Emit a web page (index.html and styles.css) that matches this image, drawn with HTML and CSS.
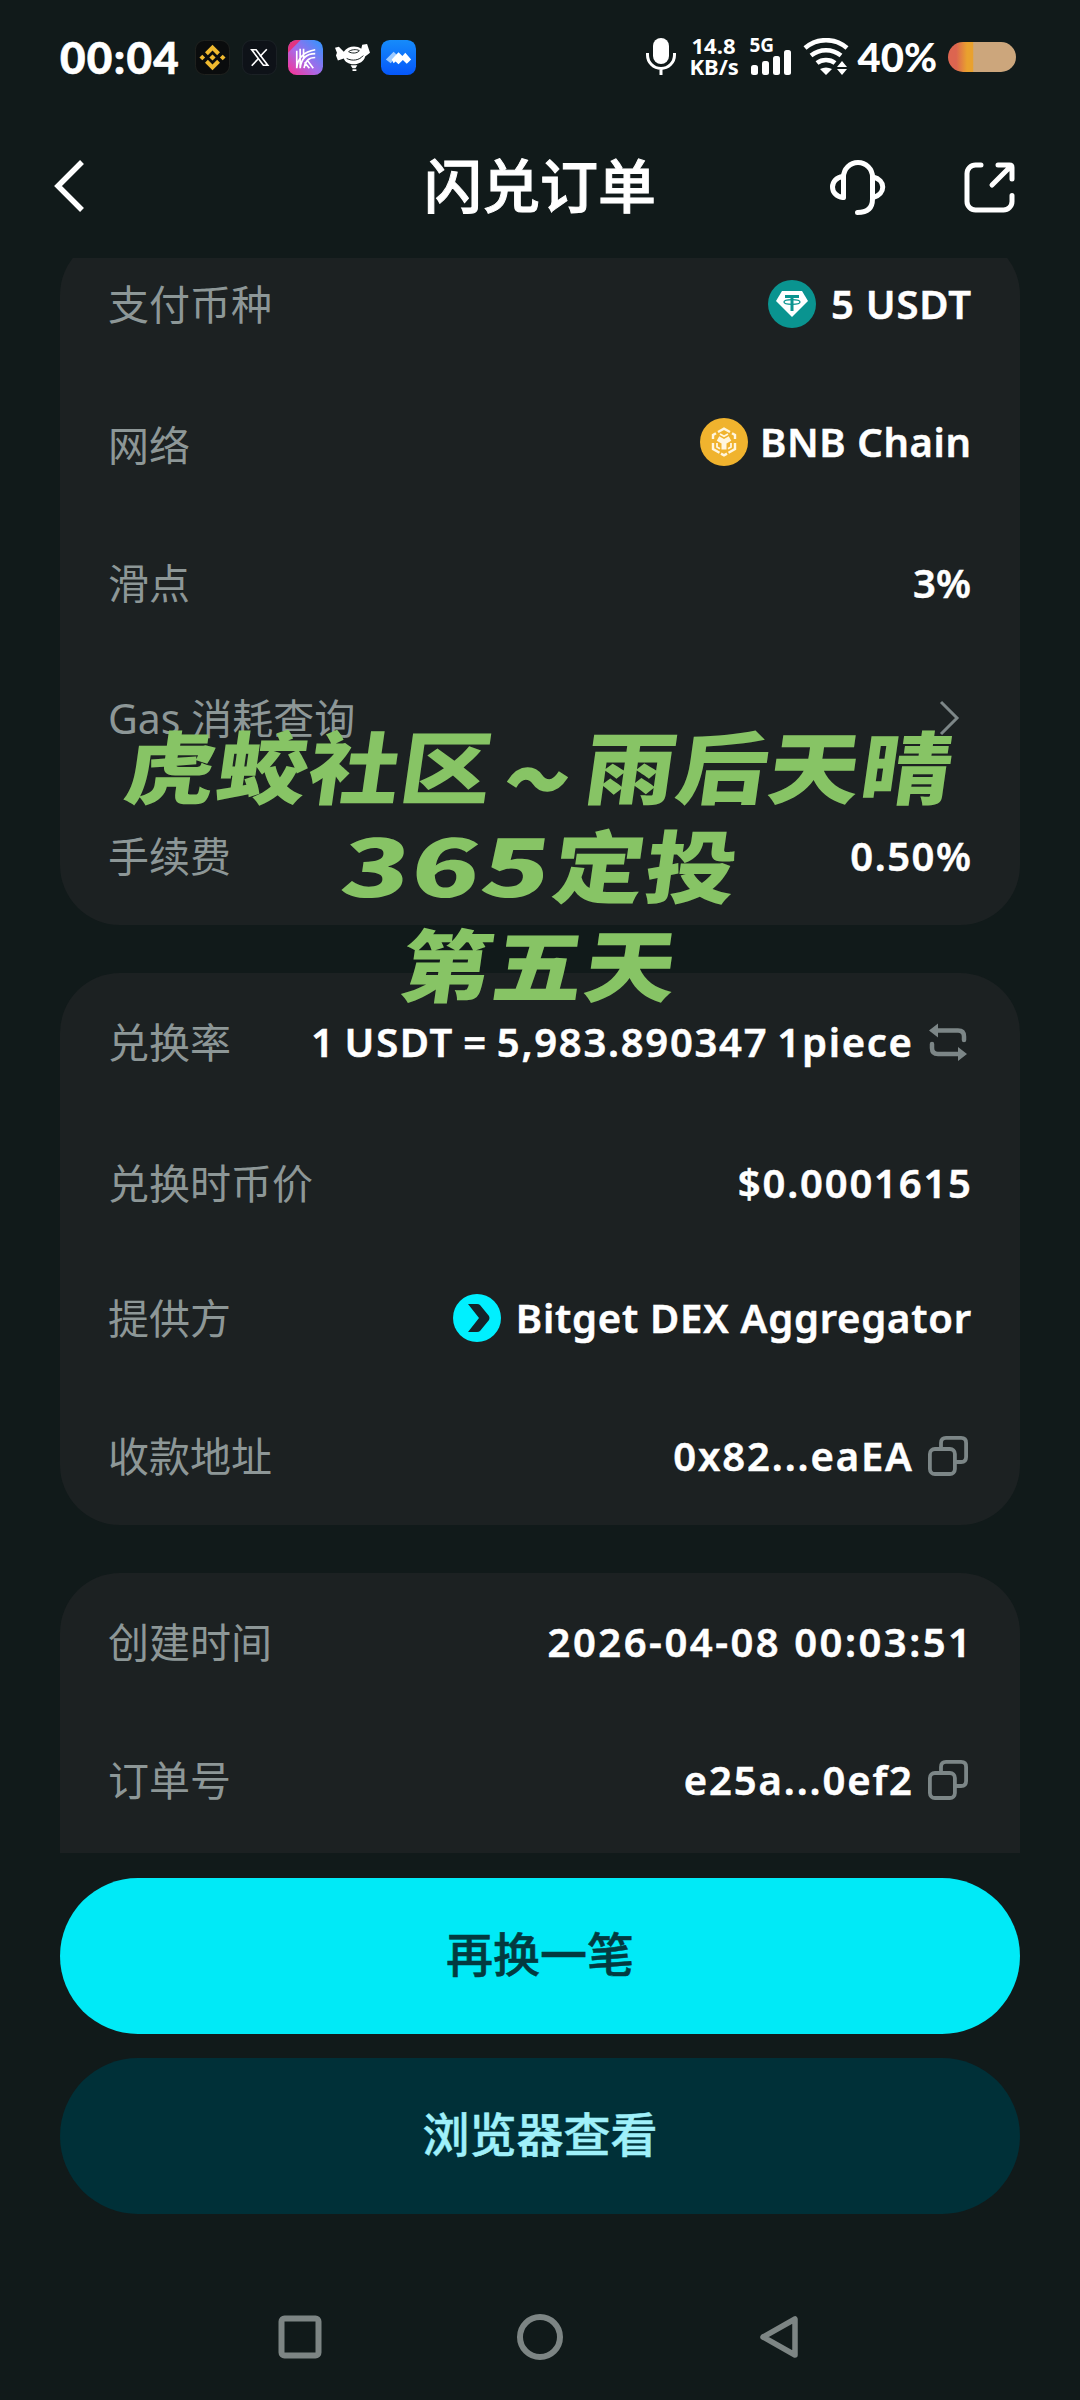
FILE: index.html
```html
<!DOCTYPE html>
<html lang="zh-CN">
<head>
<meta charset="utf-8">
<title>闪兑订单</title>
<link rel="stylesheet" href="styles.css">
</head>
<body>
<div class="phone">
  <header class="status">
    <span class="clock">00:04</span>
    <div class="apps">
      <svg class="app" viewBox="0 0 36 36"><rect x=".5" y=".5" width="35" height="35" rx="9" fill="#0a0c0d" stroke="#20221f"/><g fill="#efb92f"><path d="M18 5l7.700 7.700-2.900 2.900L18 10.800l-4.800 4.800-2.900-2.900zM18 31l7.700-7.700-2.900-2.900L18 25.200l-4.800-4.800-2.900 2.900zM7.500 15.100l2.900 2.900-2.900 2.900L4.600 18zM28.500 15.100l2.900 2.900-2.900 2.900-2.900-2.900zM18 14.800l3.200 3.200-3.200 3.200-3.200-3.200z"/></g></svg>
      <svg class="app" viewBox="0 0 36 36"><rect x=".5" y=".5" width="35" height="35" rx="9" fill="#0e1218" stroke="#1c2226"/><path d="M10 10h4.500l12 16h-4.500z" fill="none" stroke="#fff" stroke-width="1.700"/><path d="M25.500 9.500l-7 7.500M17 19l-7 7.500" stroke="#fff" stroke-width="1.700"/></svg>
      <svg class="app" viewBox="0 0 36 36"><defs><linearGradient id="k" x1="0" y1="1" x2="1" y2="0"><stop offset="0" stop-color="#ff2f8e"/><stop offset=".45" stop-color="#a869e8"/><stop offset="1" stop-color="#2b98ff"/></linearGradient></defs><rect width="36" height="36" rx="9" fill="url(#k)"/><path d="M0 13V9a9 9 0 0 1 9-9h4z" fill="#e2347f"/><g fill="none" stroke="#fff" stroke-width="1.700"><path d="M9 11v18M12.500 9v20M16 9v10M9 29c1-11 7-17 19-19M12.500 29c1-9 6-15 15.500-15M16.500 29c1-7 5-11 11.500-11M17 23l5 6M20 21l6 8"/></g></svg>
      <svg class="app" viewBox="0 0 36 36"><path d="M0 8l4-1 5 5c4-6 13-7 18-3l1-4 5-1 3 9-5 4c-1 5-6 8-12 8-5 0-9-3-10-6l-6 2-2-5 1-3z" fill="#fff"/><path d="M14 12c2-2 8-3 11-1-2 3-8 3-11 1zM12 19c6 3 13 2 17-3" fill="none" stroke="#111a1a" stroke-width="1"/><path d="M16 26h7l-2 3h-3zM18 30h4v2h-4z" fill="#fff"/></svg>
      <svg class="app" viewBox="0 0 36 36"><defs><linearGradient id="b" x1="0" y1="0" x2="0" y2="1"><stop offset="0" stop-color="#168bfa"/><stop offset="1" stop-color="#0557fa"/></linearGradient></defs><rect width="36" height="36" rx="9" fill="url(#b)"/><path d="M5 20l8-8 4 4-7 8z" fill="#9dcaff"/><path d="M11 20l7-7.500 4 4 3-3.500 6 7-4.500 4.500-4-4-4.500 4.500-3-3-2 2z" fill="#fff"/></svg>
    </div>
    <div class="signals">
      <svg class="mic" viewBox="0 0 30 38"><rect x="7" y="0" width="16" height="26" rx="8" fill="#fff"/><path d="M1.500 15v2a13.500 13.500 0 0 0 27 0v-2M15 30v7" fill="none" stroke="#fff" stroke-width="3"/></svg>
      <div class="speed"><span>14.8</span><span>KB/s</span></div>
      <div class="cell"><span>5G</span><svg viewBox="0 0 42 26"><g fill="#fff"><rect x="1" y="15" width="7" height="10" rx="2.500"/><rect x="12" y="11" width="7" height="14" rx="2.500"/><rect x="23" y="6" width="7" height="19" rx="2.500"/><rect x="34" y="0" width="7" height="25" rx="2.500"/></g></svg></div>
      <svg class="wifi" viewBox="0 0 46 38"><g fill="none" stroke="#fff" stroke-width="4.500"><path d="M2 10C14-.500 32-.500 44 10M8 17.500c9-7 21-7 30 0M14 25c5-4 13-4 18 0"/></g><path d="M17 31q6-3 12 0l-6 6zM34 29l5-6 5 6zM34 31h10l-5 6z" fill="#fff"/></svg>
      <span class="percent">40%</span>
      <span class="battery"></span>
    </div>
  </header>

  <nav class="titlebar">
    <svg class="back" viewBox="0 0 32 54"><path d="M28 3L4 27l24 24" fill="none" stroke="#fff" stroke-width="5.500"/></svg>
    <h1>闪兑订单</h1>
    <svg class="headset" viewBox="0 0 58 58"><g fill="none" stroke="#fff" stroke-width="5" stroke-linecap="round" stroke-linejoin="round"><path d="M14.500 38.500V18a14.500 14.500 0 0 1 29 0v22q0 13.500-15 13.500"/><path d="M14 17.500C0 19 0 37 14 38.500M44 18c13 3 13 17 0 20.500"/></g></svg>
    <svg class="share" viewBox="0 0 52 52"><g fill="none" stroke="#fff" stroke-width="5" stroke-linecap="round" stroke-linejoin="round"><path d="M17 3H11.500a8.500 8.500 0 0 0-8.500 8.500v28a8.500 8.500 0 0 0 8.500 8.500h28a8.500 8.500 0 0 0 8.500-8.500V33.500M34 3h11.500q2.500 0 2.500 2.500V17M47 4L28 23"/></g></svg>
  </nav>

  <main class="content">
    <section class="card card-pay">
      <div class="row"><span class="label">支付币种</span><span class="value"><svg class="coin" viewBox="0 0 48 48"><circle cx="24" cy="24" r="24" fill="#0a9490"/><path d="M14 11h20l6 10-16 16L8 21z" fill="#fff"/><path d="M17 16.500h14M24 16v15" stroke="#0a9490" stroke-width="3"/><ellipse cx="24" cy="22" rx="8" ry="2.300" fill="none" stroke="#0a9490" stroke-width="1.300"/></svg><b class="w-usdt">5 USDT</b></span></div>
      <div class="row row-network"><span class="label">网络</span><span class="value"><svg class="coin" viewBox="0 0 48 48"><circle cx="24" cy="24" r="24" fill="#f0b32e"/><g fill="none" stroke="#fff6df" stroke-width="2.400"><path d="M18 14l6-3.300 6 3.300M13 21v-4l3-1.800M35 21v-4l-3-1.800M13 25v6l6.500 3.800M35 25v6l-6.500 3.800M21 35.600l3 1.700 3-1.700"/><path d="M18 20.500l6 3.500 6-3.500M24 24v7.500" stroke-width="5"/><path d="M20 16l4 2.300 4-2.300M17 25v4l3 1.800M31 25v4l-3 1.800" stroke-width="1.800"/></g></svg><b class="w-bnb">BNB Chain</b></span></div>
      <div class="row row-plain"><span class="label">滑点</span><span class="value"><b>3%</b></span></div>
      <div class="row"><span class="label">Gas 消耗查询</span><span class="value"><svg class="more" viewBox="0 0 22 36"><path d="M2 2l16 16L2 34" fill="none" stroke="#7d8788" stroke-width="3"/></svg></span></div>
      <div class="row"><span class="label">手续费</span><span class="value"><b class="w-fee">0.50%</b></span></div>
    </section>

    <section class="card card-rate">
      <div class="row"><span class="label">兑换率</span><span class="value"><b class="w-rate">1 USDT = 5,983.890347 1piece</b><svg class="tool" viewBox="0 0 40 40"><g fill="none" stroke="#7c8687" stroke-width="4.500" stroke-linecap="round"><path d="M8 8.500h22q6 0 6 6V18M32 32H10q-6 0-6-6v-4"/></g><path d="M1 8.500L10 1.500v14zM39 32l-9-7v14z" fill="#7c8687"/></svg></span></div>
      <div class="row row-plain"><span class="label">兑换时币价</span><span class="value"><b class="w-price">$0.0001615</b></span></div>
      <div class="row"><span class="label">提供方</span><span class="value"><svg class="coin" viewBox="0 0 48 48"><circle cx="24" cy="24" r="24" fill="#00f0ff"/><path d="M15 10h9q2 0 3 1l9 11q1 2 0 4l-9 11q-1 1-3 1h-9l11-14z" fill="#14242a"/></svg><b class="w-dex">Bitget DEX Aggregator</b></span></div>
      <div class="row"><span class="label">收款地址</span><span class="value"><b class="w-hash">0x82...eaEA</b><svg class="tool" viewBox="0 0 40 40"><g fill="none" stroke="#7c8687" stroke-width="3.800"><rect x="1.900" y="13" width="25" height="25" rx="5"/><path d="M13 13V6.900q0-5 5-5h15.100q5 0 5 5V21q0 5-5 5h-6.500"/></g></svg></span></div>
    </section>

    <section class="card card-meta">
      <div class="row"><span class="label">创建时间</span><span class="value"><b class="w-date">2026-04-08 00:03:51</b></span></div>
      <div class="row"><span class="label">订单号</span><span class="value"><b class="w-hash">e25a...0ef2</b><svg class="tool" viewBox="0 0 40 40"><g fill="none" stroke="#7c8687" stroke-width="3.800"><rect x="1.900" y="13" width="25" height="25" rx="5"/><path d="M13 13V6.900q0-5 5-5h15.100q5 0 5 5V21q0 5-5 5h-6.500"/></g></svg></span></div>
    </section>
  </main>

  <div class="actions">
    <button class="btn primary">再换一笔</button>
    <button class="btn secondary">浏览器查看</button>
  </div>

  <footer class="navkeys">
    <svg viewBox="0 0 48 48"><rect x="5.500" y="5.500" width="37" height="37" rx="3" fill="none" stroke="#7d8584" stroke-width="6"/></svg>
    <svg viewBox="0 0 48 48"><circle cx="24" cy="24" r="20" fill="none" stroke="#7d8584" stroke-width="6"/></svg>
    <svg viewBox="0 0 48 48"><path d="M39 6v36L7 24z" fill="none" stroke="#7d8584" stroke-width="5.500" stroke-linejoin="round"/></svg>
  </footer>

  <div class="caption">
    <p>虎蛟社区<span class="tilde">～</span>雨后天晴</p>
    <p><span class="digits">365</span>定投</p>
    <p>第五天</p>
  </div>
</div>
</body>
</html>
```
FILE: styles.css
```css
* { box-sizing: border-box; }
body { margin: 0; background: #111a1a; }
svg { display: block; flex: none; }
.phone {
  position: relative;
  width: 1080px;
  height: 2400px;
  overflow: hidden;
  display: flex;
  flex-direction: column;
  background: #111a1a;
  color: #fff;
  font-family: "Noto Sans", "Noto Sans CJK SC", sans-serif;
}

/* status bar */
.status { height: 114px; display: flex; align-items: center; padding: 0 64px 0 60px; }
.clock { font: 900 44px/60px Lato, sans-serif; letter-spacing: 1.300px; width: 135px; -webkit-text-stroke: .6px currentColor; }
.apps { display: flex; gap: 11.600px; }
.app { width: 35px; height: 35px; }
.signals { margin-left: auto; display: flex; align-items: center; }
.mic { width: 30px; height: 38px; margin-right: 14px; }
.speed { display: flex; flex-direction: column; width: 48px; font: 700 22px/21px "Noto Sans", sans-serif; text-align: center; margin: 0 12px 3px 0; }
.cell { width: 44px; font: 700 19px/15px "Noto Sans", sans-serif; }
.cell span { display: block; height: 12px; }
.cell svg { width: 42px; height: 26px; }
.wifi { width: 46px; height: 38px; margin: 0 9px; }
.percent { font: 900 40px/60px Lato, sans-serif; width: 82px; }
.battery { width: 68px; height: 30px; margin-left: 8.500px; border-radius: 15px; background: linear-gradient(90deg, #dc6550 0 12%, #e9a12e 28% 36%, #cca67c 38%); }

/* title bar */
.titlebar { height: 144px; display: flex; align-items: center; padding: 0 64px 0 54px; }
.back { width: 32px; height: 54px; }
.titlebar h1 { flex: 1; margin: 0 0 7px 338px; font-size: 58px; line-height: 80px; font-weight: 500; font-family: "Noto Sans CJK SC", sans-serif; -webkit-text-stroke: 1px currentColor; }
.headset { width: 58px; height: 58px; margin-top: 4px; }
.share { width: 52px; height: 52px; margin: 4px 0 0 77px; }

/* order details; the first card is scrolled partly under the title bar */
.content { height: 1595px; overflow: hidden; padding: 0 60px; display: flex; flex-direction: column; gap: 48px; }
.card { flex: none; background: #1c2122; border-radius: 60px; padding: 0 49px 0 48px; }
.card-pay { height: 690px; margin-top: -23px; }
.card-rate { height: 552px; }
.card-meta { height: 400px; }
.row { height: 138px; display: flex; align-items: center; justify-content: space-between; padding-bottom: 1px; }
.row-plain { padding: 5px 0 0; }
.row-network .label { padding-top: 6px; }
.label { font-size: 41px; line-height: 60px; color: #8d9797; white-space: nowrap; }
.value { display: flex; align-items: center; white-space: nowrap; }
.value b { --track: 0px; font-size: 40px; line-height: 60px; font-weight: 600; letter-spacing: var(--track); margin-right: calc(var(--track) * -1); -webkit-text-stroke: .5px currentColor; }
.value .w-usdt { --track: .8px; }
.value .w-bnb { --track: .6px; }
.value .w-fee { --track: 1.500px; }
.value .w-rate { --track: 1.700px; word-spacing: -3px; }
.value .w-price { --track: 1.800px; }
.value .w-dex { --track: .75px; }
.value .w-hash { --track: 1.850px; }
.value .w-date { --track: 2.500px; }
.coin { width: 48px; height: 48px; margin-right: 15px; }
.row-network .coin { margin-right: 12px; }
.tool { width: 40px; height: 40px; margin: 0 3px 0 16px; }
.more { width: 22px; height: 36px; margin-right: 10px; }

/* actions */
.actions { padding: 25px 60px 0; display: flex; flex-direction: column; gap: 24px; }
.btn { height: 156px; border: 0; border-radius: 78px; padding: 0 0 8px; font: 500 47px/60px "Noto Sans CJK SC", sans-serif; -webkit-text-stroke: .5px currentColor; }
.primary { background: #00eaf7; color: #033a40; }
.secondary { background: #003038; color: #9ff0fa; }

.navkeys { margin-top: auto; height: 126px; display: flex; align-items: center; justify-content: space-between; padding: 0 276px; }
.navkeys svg { width: 48px; height: 48px; }

/* caption laid over the cards */
.caption { position: absolute; left: 0; right: 0; top: 714px; text-align: center; color: #87c465; font: 900 79px/99px "Noto Sans CJK SC", sans-serif; letter-spacing: 1px; }
.caption p { margin: 0; transform: scaleX(1.150) skewX(-7deg); }
.digits { display: inline-block; transform: scaleX(1.240); margin: 0 19px; letter-spacing: 1px; }
.tilde { display: inline-block; transform: translateY(12px) scale(.68, .85); -webkit-text-stroke: 3px currentColor; }
```
